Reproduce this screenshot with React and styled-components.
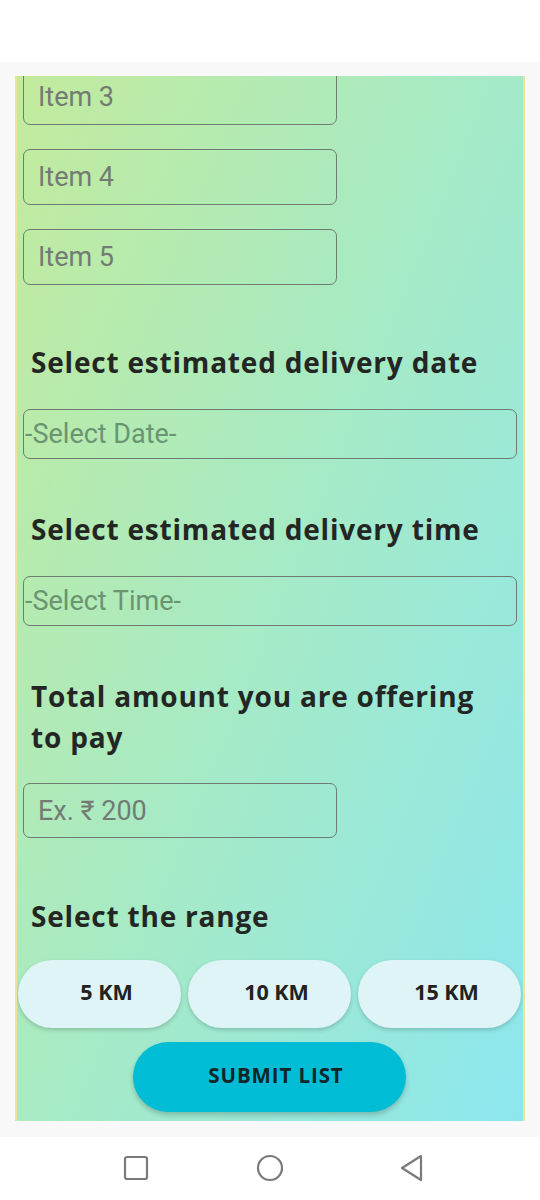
import React from "react";
import styled, { createGlobalStyle } from "styled-components";

const Global = createGlobalStyle`
  html, body { margin: 0; padding: 0; background: #ffffff; }
  body { font-family: "Open Sans", "Noto Sans", sans-serif; }
  * { box-sizing: border-box; }
`;

const Screen = styled.div`
  width: 540px;
  height: 1200px;
  display: flex;
  flex-direction: column;
  background: #ffffff;
`;

const StatusBar = styled.div`
  height: 62px;
  background: #ffffff;
`;

const Body = styled.div`
  height: 1075px;
  background: #f8f8f8;
  padding: 14px 15px 16px 15px;
  display: flex;
`;

const Panel = styled.div`
  flex: 1;
  overflow: hidden;
  border-left: 2px solid #f1e29a;
  border-right: 2px solid #f1e29a;
  background: linear-gradient(112deg, #c3eb9c 0%, #a6eac6 50%, #8ce6ee 100%);
  padding: 0 2px 0 6px;
`;

const Content = styled.div`
  margin-top: -7px;
  display: flex;
  flex-direction: column;
`;

const ItemList = styled.div`
  display: flex;
  flex-direction: column;
  gap: 24px;
`;

const Field = styled.div`
  width: ${(p) => (p.$full ? "494px" : "314px")};
  height: ${(p) => p.$h || 56}px;
  border: 1.5px solid #6f7a70;
  border-radius: 7px;
  display: flex;
  align-items: center;
  padding-left: ${(p) => (p.$flush ? 1 : 14)}px;
  font-family: Roboto, "Liberation Sans", sans-serif;
  font-size: 27px;
  color: ${(p) => (p.$green ? "#6a9472" : "#737b74")};
`;

const Heading = styled.h2`
  margin: ${(p) => p.$top}px 0 ${(p) => p.$bottom}px 8px;
  font-family: "Open Sans", "Noto Sans", sans-serif;
  font-weight: 700;
  font-size: 28px;
  line-height: 41px;
  color: #232623;
  letter-spacing: 0.8px;
`;

const RangeRow = styled.div`
  display: flex;
  gap: 7px;
  margin-left: -5px;
`;

const RangeButton = styled.button`
  width: 163px;
  height: 68px;
  border: none;
  border-radius: 34px;
  background: #dff4f6;
  box-shadow: 0 2px 4px rgba(0, 0, 0, 0.18);
  font-family: "Open Sans", "Noto Sans", sans-serif;
  font-weight: 700;
  font-size: 21.5px;
  color: #222;
  padding: 0 0 5px 14px;
  cursor: pointer;
`;

const SubmitWrap = styled.div`
  display: flex;
  justify-content: center;
  margin: 14px 0 0 -6px;
`;

const SubmitButton = styled.button`
  width: 273px;
  height: 70px;
  border: none;
  border-radius: 35px;
  background: #00bcd4;
  box-shadow: 0 3px 5px rgba(0, 0, 0, 0.2);
  font-family: "Open Sans", "Noto Sans", sans-serif;
  font-weight: 700;
  font-size: 20.5px;
  letter-spacing: 0.9px;
  color: #12262a;
  padding: 0 0 4px 14px;
  cursor: pointer;
`;

const NavBar = styled.div`
  height: 63px;
  background: #ffffff;
  display: flex;
  align-items: center;
  padding-left: 123px;
  padding-bottom: 1px;
`;

const NavSlot = styled.div`
  width: ${(p) => p.$w}px;
  display: flex;
`;

export default function App() {
  return (
    <Screen>
      <Global />
      <StatusBar />
      <Body>
        <Panel>
          <Content>
            <ItemList>
              <Field>Item 3</Field>
              <Field>Item 4</Field>
              <Field>Item 5</Field>
            </ItemList>

            <Heading $top={57} $bottom={26}>Select estimated delivery date</Heading>
            <Field $full $h={50} $flush $green>-Select Date-</Field>

            <Heading $top={50} $bottom={26}>Select estimated delivery time</Heading>
            <Field $full $h={50} $flush $green>-Select Time-</Field>

            <Heading $top={50} $bottom={25}>
              Total amount you are offering
              <br />
              to pay
            </Heading>
            <Field $h={55}>Ex. ₹ 200</Field>

            <Heading $top={58} $bottom={23}>Select the range</Heading>
            <RangeRow>
              <RangeButton>5 KM</RangeButton>
              <RangeButton>10 KM</RangeButton>
              <RangeButton>15 KM</RangeButton>
            </RangeRow>

            <SubmitWrap>
              <SubmitButton>SUBMIT LIST</SubmitButton>
            </SubmitWrap>
          </Content>
        </Panel>
      </Body>
      <NavBar>
        <NavSlot $w={133}>
          <svg width="26" height="26" viewBox="0 0 26 26">
            <rect x="2" y="2" width="22" height="22" rx="2" fill="none" stroke="#7a7a7a" strokeWidth="2.2" />
          </svg>
        </NavSlot>
        <NavSlot $w={143}>
          <svg width="28" height="28" viewBox="0 0 28 28">
            <circle cx="14" cy="14" r="12" fill="none" stroke="#7a7a7a" strokeWidth="2.2" />
          </svg>
        </NavSlot>
        <NavSlot $w={30}>
          <svg width="26" height="28" viewBox="0 0 26 28">
            <path d="M22 2 L3 14 L22 26 Z" fill="none" stroke="#7a7a7a" strokeWidth="2.2" strokeLinejoin="round" />
          </svg>
        </NavSlot>
      </NavBar>
    </Screen>
  );
}
